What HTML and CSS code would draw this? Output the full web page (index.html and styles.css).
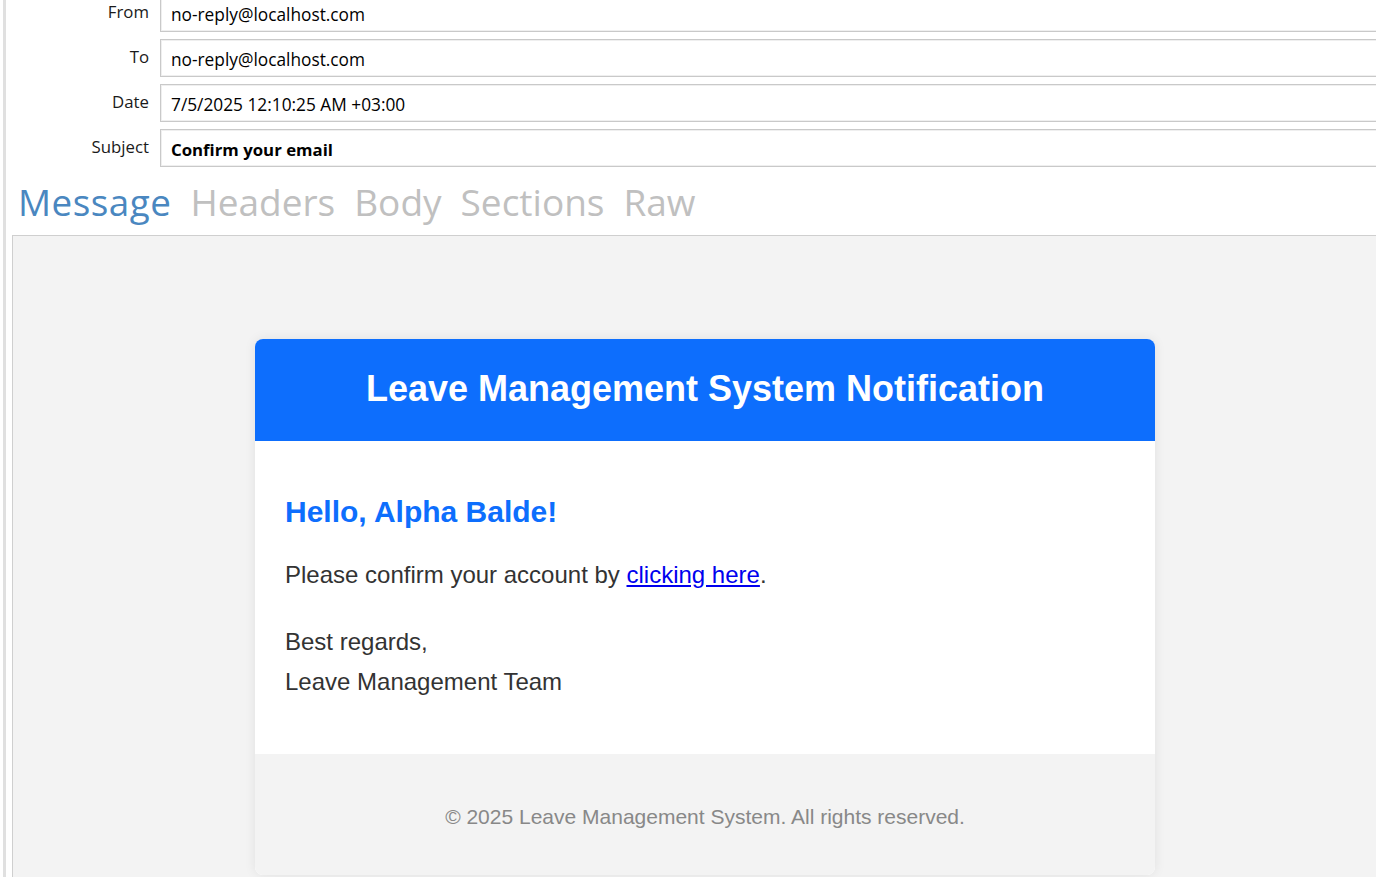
FILE: index.html
```html
<!DOCTYPE html>
<html>
<head>
<meta charset="utf-8">
<link rel="stylesheet" href="styles.css">
</head>
<body>
<div class="page">
  <div class="sidebar-bar"></div>
  <div class="main">
    <div class="fields">
      <div class="row first"><div class="label">From</div><div class="field">no-reply@localhost.com</div></div>
      <div class="row"><div class="label">To</div><div class="field">no-reply@localhost.com</div></div>
      <div class="row"><div class="label">Date</div><div class="field">7/5/2025 12:10:25 AM +03:00</div></div>
      <div class="row"><div class="label">Subject</div><div class="field subject">Confirm your email</div></div>
    </div>
    <div class="tabs">
      <span class="tab active">Message</span>
      <span class="tab">Headers</span>
      <span class="tab">Body</span>
      <span class="tab">Sections</span>
      <span class="tab">Raw</span>
    </div>
    <div class="frame">
      <div class="card">
        <div class="card-header"><h1>Leave Management System Notification</h1></div>
        <div class="card-body">
          <h2>Hello, Alpha Balde!</h2>
          <p class="p1">Please confirm your account by <a href="#">clicking here</a>.</p>
          <p class="p2">Best regards,<br>Leave Management Team</p>
        </div>
        <div class="card-footer"><p>© 2025 Leave Management System. All rights reserved.</p></div>
      </div>
    </div>
  </div>
</div>
</body>
</html>
```
FILE: styles.css
```css
html, body {
  margin: 0;
  padding: 0;
  overflow: hidden;
  background: #fff;
  height: 877px;
}
.page {
  display: flex;
  height: 877px;
  font-family: "Open Sans", "Noto Sans", sans-serif;
  color: #111;
}
.sidebar-bar {
  width: 3px;
  margin-left: 3px;
  background: #e0e0e0;
  flex: none;
}
.main {
  flex: none;
  width: 1400px;
  margin-left: 6px;
  display: flex;
  flex-direction: column;
}
.fields {
  display: flex;
  flex-direction: column;
  gap: 7px;
  margin-top: -6px;
}
.row {
  display: flex;
  align-items: flex-start;
}
.label {
  width: 137px;
  text-align: right;
  font-size: 16.8px;
  line-height: 20px;
  padding-top: 8px;
  color: #1a1a1a;
  flex: none;
}
.field {
  margin-left: 11px;
  flex: 1;
  border: 1px solid #c9c9c9;
  box-shadow: inset 0 0 0 1px #efefef;
  border-right: none;
  font-size: 17.3px;
  line-height: 20px;
  padding: 10px 10px 6px;
  box-sizing: border-box;
  height: 38px;
  color: #000;
}
.field.subject {
  font-weight: 700;
  font-size: 16.8px;
}
.tabs {
  display: flex;
  gap: 19px;
  margin-top: 9px;
  padding-left: 6px;
  height: 59px;
  align-items: flex-start;
}
.tab {
  font-size: 37px;
  line-height: 52px;
  color: #c0c0c0;
}
.tab.active {
  font-size: 36.8px;
  color: #4a87c0;
  letter-spacing: 0.5px;
}
.frame {
  flex: 1;
  margin-top: 0;
  border-top: 1px solid #cfcfcf;
  border-left: 1px solid #cfcfcf;
  background: #f3f3f3;
  padding-top: 103px;
  width: 1386px;
  box-sizing: border-box;
  font-family: "Liberation Sans", Arial, sans-serif;
}
.card {
  width: 900px;
  margin: 0 auto 0 242px;
  background: #fff;
  border-radius: 8px;
  overflow: hidden;
  box-shadow: 0 0 12px rgba(0,0,0,0.08);
}
.card-header {
  background: #0d6efd;
  padding: 29px 30px 31px;
  text-align: center;
}
.card-header h1 {
  margin: 0;
  color: #fff;
  font-size: 36px;
  line-height: 42px;
  font-weight: 700;
}
.card-body {
  padding: 30px;
  color: #333;
}
.card-body h2 {
  margin: 24px 0 25px;
  font-size: 30px;
  line-height: 34.5px;
  color: #0d6efd;
  font-weight: 700;
}
.card-body p {
  font-size: 24px;
  line-height: 40px;
  margin: 0 0 27px;
}
.card-body p.p2 {
  margin-bottom: 22px;
}
.card-body a {
  color: #0000ee;
  text-decoration: underline;
}
.card-footer {
  background: #f3f3f3;
  text-align: center;
  padding: 47px 30px 43px;
}
.card-footer p {
  margin: 0;
  font-size: 21px;
  line-height: 31px;
  color: #888;
}
```
